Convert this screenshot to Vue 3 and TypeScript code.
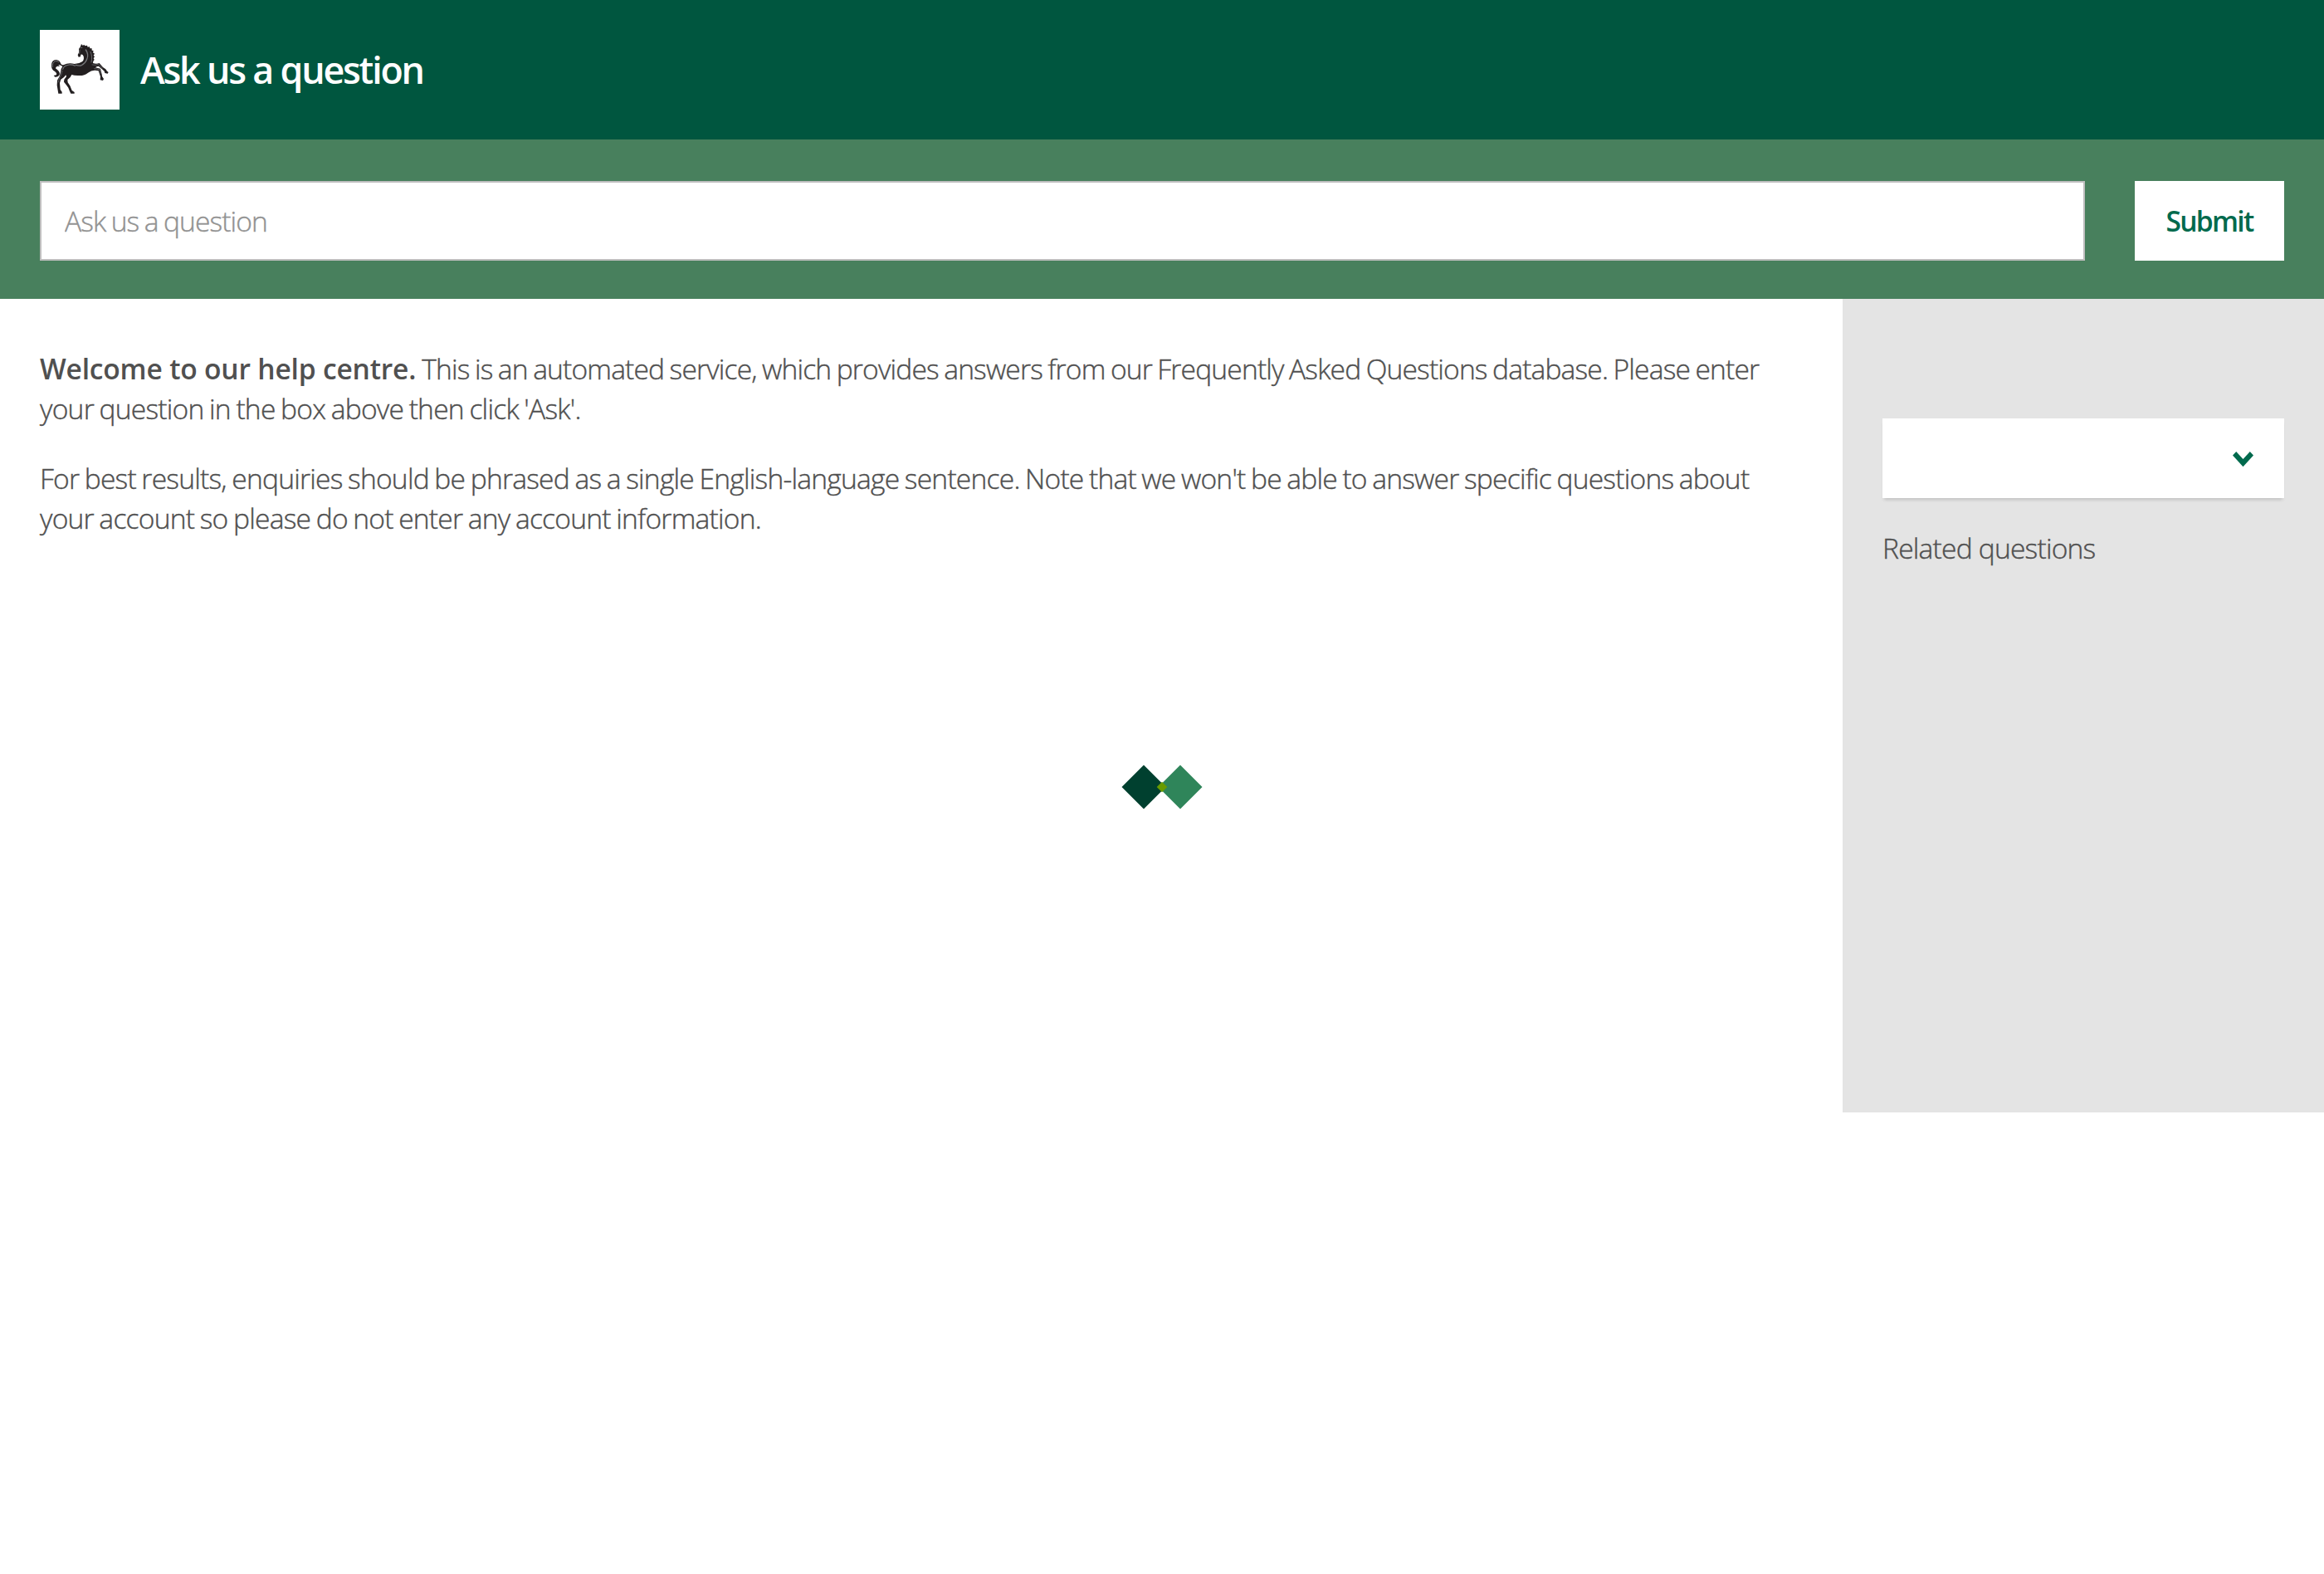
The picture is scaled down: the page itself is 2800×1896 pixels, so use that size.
<script setup lang="ts">
import { ref } from 'vue'

interface Line {
  lead?: string
  text: string
  spacing: number
}

const question = ref('')
const paragraphs: Line[][] = [
  [
    {
      lead: 'Welcome to our help centre.',
      text: 'This is an automated service, which provides answers from our Frequently Asked Questions database. Please enter',
      spacing: -0.84,
    },
    { text: "your question in the box above then click 'Ask'.", spacing: -0.76 },
  ],
  [
    {
      text: "For best results, enquiries should be phrased as a single English-language sentence. Note that we won't be able to answer specific questions about",
      spacing: -0.78,
    },
    { text: 'your account so please do not enter any account information.', spacing: -0.77 },
  ],
]
</script>

<template>
  <div class="page">
    <header class="header">
      <svg class="logo" viewBox="24 24 288 288" aria-hidden="true">
        <rect x="24" y="24" width="288" height="288" fill="#fff" />
        <path
          fill="#231f20"
          d="M174 75L179 80L184 78L188 82L195 80L197 86L204 85L205 91L212 91L212 98L218 99L216 106L222 110L218 116L222 121L218 127L221 132L217 137L216 144Q228 148 239 144L252 159L262 166L267 173L272 177L269 182L259 180L257 173L247 164L236 155L229 157L225 160L243 164L248 184L249 192L255 201L252 207L242 205L243 193L236 172L224 170Q211 169 198 179Q186 189 168 189Q149 190 139 186Q136 196 124 204L125 214L133 226L140 243L149 249V254H136L132 246L127 233L119 222L111 212L112 203L120 193L118 187Q113 196 100 203L96 216L98 240L104 248V254H91L89 242L86 224L87 206Q97 193 99 178Q98 166 106 156Q96 149 91 150L96 156L88 155Q81 157 81 163L88 169Q98 177 95 187Q90 196 79 194L74 189L83 187Q88 182 78 174Q65 167 66 152Q66 133 83 132Q95 133 100 146Q104 153 111 150Q127 142 149 147Q166 147 177 139Q185 132 182 119Q178 110 172 113L171 121L164 122L161 115L165 106L165 93L171 84Z"
        />
        <g fill="none" stroke="#77787b" stroke-linecap="round" stroke-linejoin="round">
          <path stroke-width="4" d="M190 96Q202 113 194 130Q189 145 173 153Q162 154 154 151" />
          <path stroke-width="2.5" d="M207 103Q215 119 210 141M171 89L177 88M168 96L167 109" />
          <path stroke-width="3.5" d="M107 166Q110 153 130 150Q142 149 151 154" />
          <path stroke-width="3" d="M70 157Q68 142 80 137Q88 135 92 140" />
          <path stroke-width="2" d="M213 150Q226 153 236 148L250 162M221 164L240 167L244 181M105 172Q104 185 95 197L91 213" />
        </g>
      </svg>
      <h1 class="title">Ask us a question</h1>
    </header>

    <form class="search" @submit.prevent>
      <input v-model="question" class="field" type="text" placeholder="Ask us a question" />
      <button class="submit" type="submit">Submit</button>
    </form>

    <div class="content">
      <main class="main">
        <p v-for="(lines, i) in paragraphs" :key="i" class="para">
          <span v-for="line in lines" :key="line.text" class="line" :style="{ letterSpacing: line.spacing + 'px' }">
            <strong v-if="line.lead" class="lead">{{ line.lead }}</strong>{{ line.text }}
          </span>
        </p>
      </main>
      <aside class="aside">
        <div class="select">
          <svg class="chevron" viewBox="0 0 25 18" aria-hidden="true">
            <path fill="#006a4d" d="M4.2 0L12.5 9L20.8 0L25 4.6L12.5 18.2L0 4.6Z" />
          </svg>
        </div>
        <h2 class="related">Related questions</h2>
      </aside>
    </div>

    <svg class="loader" viewBox="0 0 98 54" aria-hidden="true">
      <path fill="#00402f" d="M27 .5L53.5 27L27 53.5L.5 27Z" />
      <path fill="#2f855a" d="M71 .5L97.5 27L71 53.5L44.5 27Z" />
      <path fill="#689b00" d="M49 20.700L55.300 27L49 33.300L42.700 27Z" />
    </svg>
  </div>
</template>

<style>
body {
  margin: 0;
  background: #fff;
}
</style>

<style scoped>
.page {
  min-height: 1896px;
  font-family: 'Open Sans', 'Noto Sans', sans-serif;
  font-size: 33.6px;
  font-weight: 300;
  line-height: 48px;
  color: #505050;
}
.header {
  display: flex;
  align-items: center;
  gap: 25px;
  box-sizing: border-box;
  height: 168px;
  padding: 0 48px;
  background: #00563f;
}
.logo {
  width: 96px;
  height: 96px;
}
.title {
  margin: 0;
  padding-bottom: 1px;
  font-size: 44.8px;
  font-weight: 600;
  letter-spacing: -2.2px;
  color: #fff;
}
.search {
  display: flex;
  gap: 60px;
  box-sizing: border-box;
  height: 192px;
  padding: 50px 48px 46px;
  background: #48805d;
}
.field {
  flex: 1;
  box-sizing: border-box;
  min-width: 0;
  padding: 0 28px;
  border: 2px solid #bebebe;
  border-radius: 0;
  background: #fff;
  font: inherit;
  letter-spacing: -0.9px;
  word-spacing: -1.5px;
  color: #505050;
}
.field::placeholder {
  color: #929292;
  opacity: 1;
  -webkit-text-stroke: 0.4px #929292;
}
.submit {
  width: 180px;
  padding: 0;
  border: 0;
  background: #fff;
  font: inherit;
  font-weight: 600;
  letter-spacing: -1.7px;
  color: #006a4d;
}
.content {
  display: flex;
  height: 980px;
}
.main {
  flex: 1;
  padding: 60px 48px;
}
.para {
  margin: 0 0 36px;
}
.line {
  display: block;
  white-space: nowrap;
  word-spacing: -1.5px;
  -webkit-text-stroke: 0.4px #505050;
}
.lead {
  margin-right: 7px;
  font-weight: 600;
  letter-spacing: -0.2px;
  word-spacing: 0;
  -webkit-text-stroke: 0;
}
.aside {
  box-sizing: border-box;
  width: 580px;
  padding: 144px 48px 0;
  background: #e4e4e4;
}
.select {
  display: flex;
  align-items: center;
  justify-content: flex-end;
  box-sizing: border-box;
  height: 96px;
  padding: 2px 37px 0 0;
  background: #fff;
  box-shadow: 0 4px 4px -2px rgba(0, 0, 0, 0.16);
}
.chevron {
  width: 25px;
  height: 18px;
}
.related {
  margin: 36px 0 0;
  font-size: inherit;
  font-weight: 300;
  letter-spacing: -0.8px;
  -webkit-text-stroke: 0.4px #505050;
}
.loader {
  position: fixed;
  top: 921px;
  left: 1351px;
  width: 98px;
  height: 54px;
}
</style>
